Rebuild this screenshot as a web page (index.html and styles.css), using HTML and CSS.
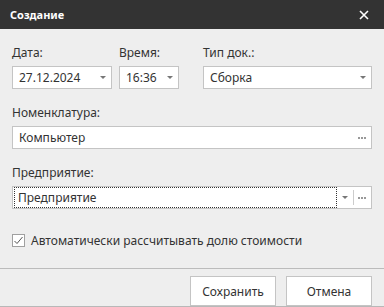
FILE: index.html
```html
<!DOCTYPE html>
<html lang="ru">
<head>
    <meta charset="UTF-8">
    <title>Создание</title>
    <link rel="stylesheet" href="styles.css">
</head>
<body>
    <div class="dialog">
        <!-- Title bar -->
        <div class="titlebar">
            <span class="title">Создание</span>
            <svg class="close" width="10" height="10" viewBox="0 0 10 10">
                <path d="M1 1 L9 9 M9 1 L1 9" stroke="#fff" stroke-width="1.6"/>
            </svg>
        </div>

        <div class="content">
            <div class="row">
                <div class="field date-field">
                    <div class="label">Дата:</div>
                    <div class="input">
                        <span class="value">27.12.2024</span>
                        <span class="arrow"></span>
                    </div>
                </div>
                <div class="field time-field">
                    <div class="label">Время:</div>
                    <div class="input">
                        <span class="value">16:36</span>
                        <span class="arrow"></span>
                    </div>
                </div>
                <div class="field type-field">
                    <div class="label">Тип док.:</div>
                    <div class="input">
                        <span class="value">Сборка</span>
                        <span class="arrow"></span>
                    </div>
                </div>
            </div>

            <div class="field">
                <div class="label">Номенклатура:</div>
                <div class="input">
                    <span class="value">Компьютер</span>
                    <svg class="dots" width="8" height="2" viewBox="0 0 8 2">
                        <rect x="0" y="0" width="2" height="2" fill="#999"/>
                        <rect x="3" y="0" width="2" height="2" fill="#999"/>
                        <rect x="6" y="0" width="2" height="2" fill="#999"/>
                    </svg>
                </div>
            </div>

            <div class="field">
                <div class="label">Предприятие:</div>
                <div class="input">
                    <span class="value focused">Предприятие</span>
                    <span class="arrow"></span>
                    <span class="sep"></span>
                    <svg class="dots" width="8" height="2" viewBox="0 0 8 2">
                        <rect x="0" y="0" width="2" height="2" fill="#999"/>
                        <rect x="3" y="0" width="2" height="2" fill="#999"/>
                        <rect x="6" y="0" width="2" height="2" fill="#999"/>
                    </svg>
                </div>
            </div>

            <label class="check">
                <span class="box">
                    <svg width="11" height="11" viewBox="0 0 11 11">
                        <path d="M1.5 6 L4 8.5 L9.5 2" fill="none" stroke="#555" stroke-width="1"/>
                    </svg>
                </span>
                <span>Автоматически рассчитывать долю стоимости</span>
            </label>
        </div>

        <!-- Buttons -->
        <div class="footer">
            <button class="btn">Сохранить</button>
            <button class="btn">Отмена</button>
        </div>
    </div>
</body>
</html>
```

FILE: styles.css
```css
body {
    margin: 0;
    padding: 0;
    font-family: "Noto Sans", "Open Sans", sans-serif;
    font-size: 12px;
    color: #333333;
    background-color: #eeeeee;
}

.dialog {
    width: 384px;
    height: 307px;
    display: flex;
    flex-direction: column;
    background-color: #eeeeee;
    box-sizing: border-box;
    border-bottom: 1px solid #b8b8b8;
}

.titlebar {
    height: 29px;
    background-color: #333333;
    display: flex;
    align-items: center;
    justify-content: space-between;
    padding: 0 10px 0 10px;
    flex-shrink: 0;
}

.title {
    color: #ffffff;
    font-size: 11px;
    font-weight: bold;
}

.close {
    margin-right: 5px;
}

.content {
    flex: 1;
    padding: 15px 12px 0 12px;
}

.row {
    display: flex;
}

.field {
    margin-bottom: 15px;
}

.date-field {
    width: 100px;
    margin-right: 7px;
}

.time-field {
    width: 60px;
    margin-right: 24px;
}

.type-field {
    flex: 1;
}

.label {
    height: 18px;
    line-height: 18px;
    margin-bottom: 4px;
}

.input {
    height: 23px;
    box-sizing: border-box;
    background-color: #ffffff;
    border: 1px solid #c4c4c4;
    display: flex;
    align-items: center;
    padding: 0 5px 0 6px;
}

.value {
    flex: 1;
    line-height: 19px;
}

.value.focused {
    margin-left: -5px;
    padding-left: 4px;
    align-self: stretch;
    display: flex;
    align-items: center;
    outline: 1px dotted #333333;
    outline-offset: -1px;
    margin-right: 5px;
}

.arrow {
    width: 0;
    height: 0;
    border-left: 3px solid transparent;
    border-right: 3px solid transparent;
    border-top: 3px solid #777777;
}

.sep {
    width: 1px;
    height: 15px;
    background-color: #cccccc;
    margin: 0 4px 0 5px;
}

.dots {
    margin-right: 0;
}

.check {
    display: flex;
    align-items: center;
    margin-top: 23px;
}

.box {
    width: 13px;
    height: 13px;
    box-sizing: border-box;
    border: 1px solid #a0a0a0;
    background-color: #ffffff;
    display: flex;
    align-items: center;
    justify-content: center;
    margin-right: 6px;
}

.footer {
    border-top: 1px solid #bbbbbb;
    display: flex;
    justify-content: flex-end;
    gap: 10px;
    padding: 7px 12px 0 12px;
    height: 38px;
    box-sizing: border-box;
}

.btn {
    width: 86px;
    height: 30px;
    background-color: #ffffff;
    border: 1px solid #c4c4c4;
    font-family: "Noto Sans", "Open Sans", sans-serif;
    font-size: 12px;
    color: #333333;
    padding: 0;
}
```
